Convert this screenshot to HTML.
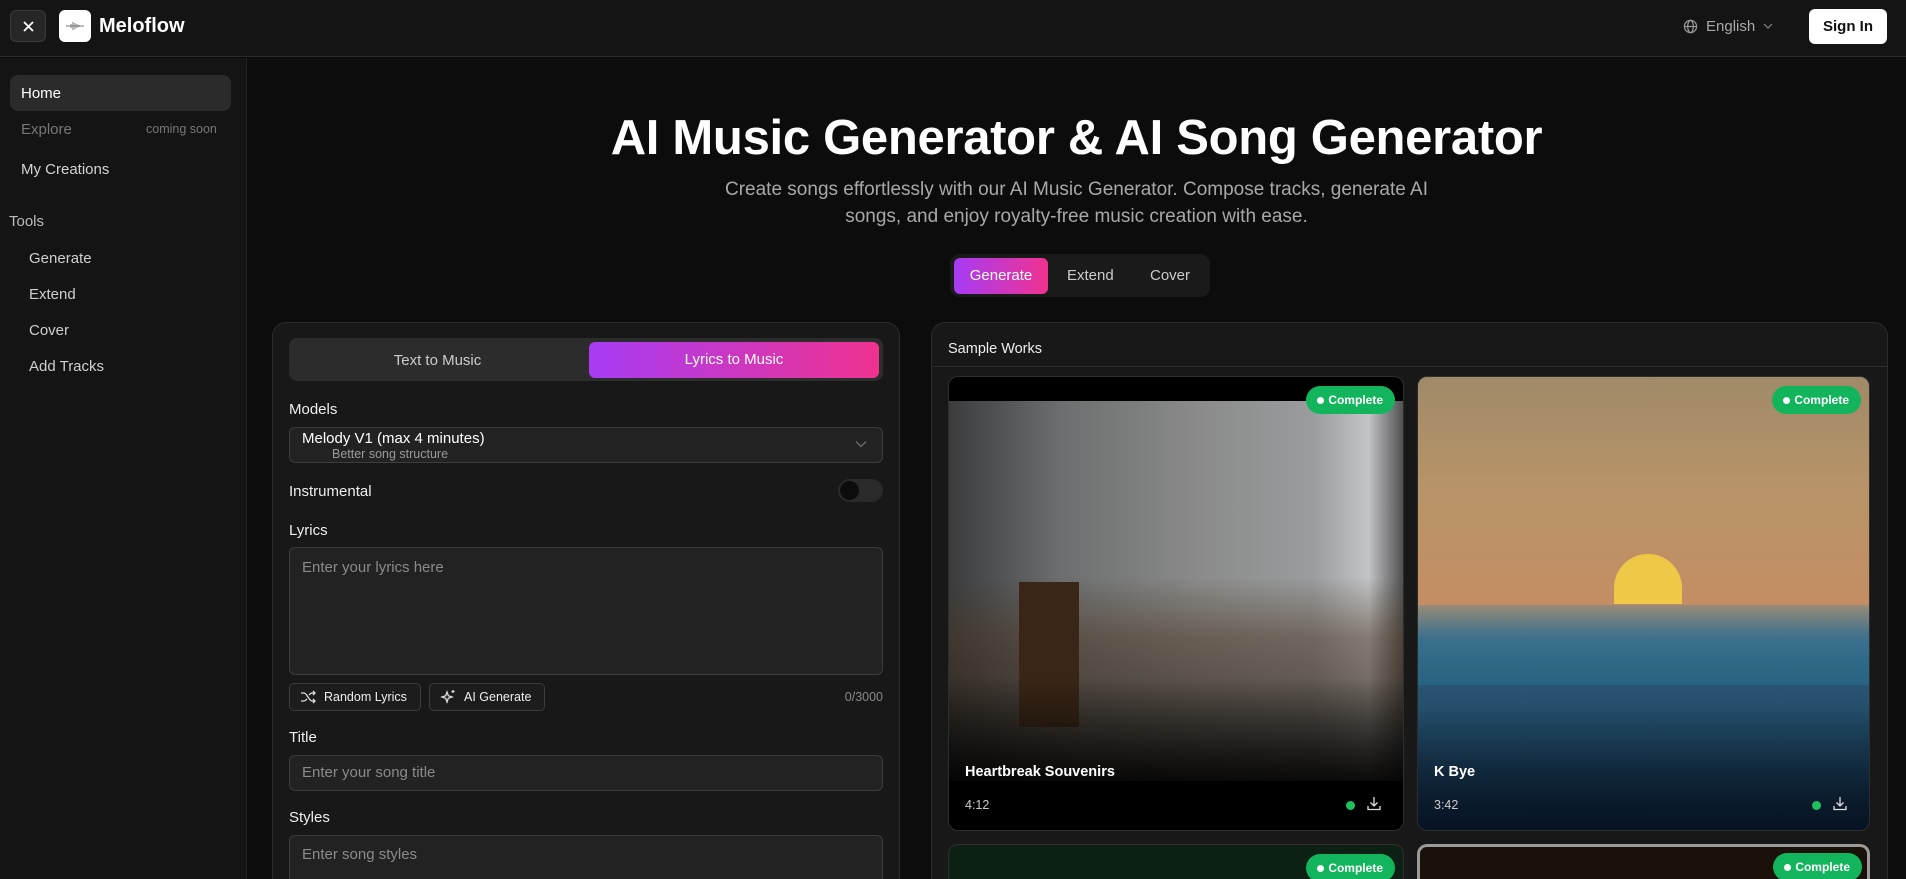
<!DOCTYPE html>
<html><head><meta charset="utf-8"><style>
*{box-sizing:border-box;margin:0;padding:0}
html{width:1906px;height:879px;overflow:hidden}
body{width:1906px;height:879px;overflow:hidden;background:#0c0c0c;font-family:"Liberation Sans",sans-serif;color:#fff;position:relative}
#wrap{position:absolute;left:0;top:0;width:1906px;height:879px;overflow:hidden}
.abs{position:absolute}
.hdr{left:0;top:0;width:1906px;height:57px;background:#141414;border-bottom:1px solid #2a2a2a}
.side{left:0;top:58px;width:247px;height:821px;background:#141414;border-right:1px solid #262626}
.nav{position:absolute;left:21px;font-size:15px;color:#d4d4d4}
.tool{position:absolute;left:29px;font-size:15px;color:#cfcfcf}
.panel{background:#181818;border:1px solid #2c2c2c;border-bottom:none;border-radius:14px 14px 0 0}
.lbl{position:absolute;left:289px;font-size:15px;color:#eee}
.inp{position:absolute;left:289px;width:594px;background:#222;border:1px solid #3c3c3c;border-radius:6px;color:#8a8a8a;font-size:15px;padding-left:12px}
.btn{position:absolute;top:683px;height:28px;border:1px solid #3c3c3c;border-radius:5px;background:#1c1c1c;font-size:12.5px;color:#eee;display:flex;align-items:center;padding-left:10px;gap:8px}
.card{position:absolute;border-radius:10px;overflow:hidden;border:1px solid #2e2e2e}
.badge{position:absolute;top:9px;right:8px;height:28px;padding:0 12px 0 22px;background:#12b45c;border-radius:14px;font-size:12px;font-weight:bold;line-height:28px;color:#fff}
.badge:before{content:"";position:absolute;left:11px;top:11px;width:7px;height:7px;border-radius:50%;background:#fff}
.ct{position:absolute;left:16px;top:387px;font-size:14.5px;font-weight:bold}
.cd{position:absolute;left:16px;top:421px;font-size:12.5px;color:#ccc}
.dot{position:absolute;right:48px;top:424px;width:9px;height:9px;border-radius:50%;background:#1fc25a}
.dl{position:absolute;right:22px;top:419px}
</style></head><body><div id="wrap">
<div class="abs hdr"></div>
<div class="abs" style="left:10px;top:10px;width:36px;height:32px;background:#262626;border:1px solid #3a3a3a;border-radius:6px"><svg width="36" height="32" viewBox="0 0 36 32"><path d="M13 11l9 9M22 11l-9 9" stroke="#fff" stroke-width="1.8"/></svg></div>
<div class="abs" style="left:59px;top:10px;width:32px;height:32px;background:#fff;border-radius:6px"><svg width="32" height="32"><path d="M7 16h18M12 14v4M14 12v8M16 13v6M18 14v4M20 15v2" stroke="#777" stroke-width="1"/></svg></div>
<div class="abs" style="left:99px;top:15px;font-size:20px;font-weight:bold">Meloflow</div>
<svg class="abs" style="left:1683px;top:19px" width="15" height="15" viewBox="0 0 16 16" fill="none" stroke="#999" stroke-width="1.3"><circle cx="8" cy="8" r="6.5"/><ellipse cx="8" cy="8" rx="3" ry="6.5"/><path d="M1.5 8h13"/></svg>
<div class="abs" style="left:1706px;top:18px;font-size:15px;color:#a8a8a8">English</div>
<svg class="abs" style="left:1763px;top:22px" width="10" height="8"><path d="M1 2l4 4 4-4" stroke="#888" fill="none" stroke-width="1.2"/></svg>
<div class="abs" style="left:1809px;top:9px;width:78px;height:35px;background:#fff;border-radius:6px;color:#111;font-size:15px;font-weight:bold;text-align:center;line-height:35px">Sign In</div>

<div class="abs side"></div>
<div class="abs" style="left:10px;top:75px;width:221px;height:36px;background:#2b2b2b;border-radius:8px"></div>
<div class="nav" style="top:85px;color:#fff">Home</div>
<div class="nav" style="top:121px;color:#777">Explore</div>
<div class="abs" style="left:146px;top:122px;font-size:12.5px;color:#777">coming soon</div>
<div class="nav" style="top:161px">My Creations</div>
<div class="abs" style="left:9px;top:213px;font-size:15px;color:#bbb">Tools</div>
<div class="tool" style="top:250px">Generate</div>
<div class="tool" style="top:286px">Extend</div>
<div class="tool" style="top:322px">Cover</div>
<div class="tool" style="top:358px">Add Tracks</div>

<div class="abs" style="left:247px;width:1659px;top:110px;text-align:center;font-size:49px;font-weight:bold;letter-spacing:-0.3px">AI Music Generator &amp; AI Song Generator</div>
<div class="abs" style="left:247px;width:1659px;top:176px;text-align:center;font-size:19px;color:#a8a8a8;line-height:27px">Create songs effortlessly with our AI Music Generator. Compose tracks, generate AI<br>songs, and enjoy royalty-free music creation with ease.</div>
<div class="abs" style="left:950px;top:254px;width:260px;height:43px;background:#1a1a1a;border-radius:10px"></div>
<div class="abs" style="left:954px;top:258px;width:94px;height:36px;border-radius:6px;background:linear-gradient(90deg,#a63cf5,#f0328f);text-align:center;line-height:36px;font-size:15px">Generate</div>
<div class="abs" style="left:1067px;top:267px;font-size:15px;color:#ccc">Extend</div>
<div class="abs" style="left:1150px;top:267px;font-size:15px;color:#ccc">Cover</div>

<div class="abs panel" style="left:272px;top:322px;width:628px;height:557px"></div>
<div class="abs" style="left:289px;top:338px;width:594px;height:43px;background:#2c2c2c;border-radius:8px"></div>
<div class="abs" style="left:289px;top:352px;width:297px;text-align:center;font-size:15px;color:#ccc">Text to Music</div>
<div class="abs" style="left:589px;top:342px;width:290px;height:36px;border-radius:6px;background:linear-gradient(90deg,#a63cf5,#f0328f);text-align:center;line-height:36px;font-size:15px">Lyrics to Music</div>
<div class="lbl" style="top:401px">Models</div>
<div class="inp" style="top:427px;height:36px;color:#fff;padding:2px 0 0 12px"><div style="font-size:15px">Melody V1 (max 4 minutes)</div><div style="font-size:12.5px;color:#999;padding-left:30px">Better song structure</div></div>
<svg class="abs" style="left:855px;top:440px" width="12" height="8"><path d="M1 1.5l5 5 5-5" stroke="#777" fill="none" stroke-width="1.2"/></svg>
<div class="lbl" style="top:483px">Instrumental</div>
<div class="abs" style="left:838px;top:479px;width:45px;height:23px;border-radius:12px;background:#2a2a2a"><div style="position:absolute;left:2px;top:2px;width:19px;height:19px;border-radius:50%;background:#0c0c0c"></div></div>
<div class="lbl" style="top:522px">Lyrics</div>
<div class="inp" style="top:547px;height:128px;padding-top:11px">Enter your lyrics here</div>
<div class="btn" style="left:289px;width:132px"><svg width="16" height="16" viewBox="0 0 16 16" fill="none" stroke="#ddd" stroke-width="1.3"><path d="M1 4h3c3 0 5 8 8 8h3M13 10l2 2-2 2M1 12h3c1.3 0 2-1 3-2M9 6c1-1 1.7-2 3-2h3M13 2l2 2-2 2"/></svg>Random Lyrics</div>
<div class="btn" style="left:429px;width:116px"><svg width="16" height="16" viewBox="0 0 16 16" fill="none" stroke="#ddd" stroke-width="1.3"><path d="M7 3l1.3 3.7L12 8l-3.7 1.3L7 13l-1.3-3.7L2 8l3.7-1.3z"/><path d="M13 1v3M11.5 2.5h3"/></svg>AI Generate</div>
<div class="abs" style="left:820px;top:690px;width:63px;text-align:right;font-size:12.5px;color:#888">0/3000</div>
<div class="lbl" style="top:729px">Title</div>
<div class="inp" style="top:755px;height:36px;line-height:34px">Enter your song title</div>
<div class="lbl" style="top:809px">Styles</div>
<div class="inp" style="top:835px;height:44px;padding-top:10px;border-bottom:none;border-radius:6px 6px 0 0">Enter song styles</div>

<div class="abs panel" style="left:931px;top:322px;width:957px;height:557px"></div>
<div class="abs" style="left:948px;top:341px;font-size:14.5px;color:#eee">Sample Works</div>
<div class="abs" style="left:932px;top:366px;width:955px;height:1px;background:#2c2c2c"></div>

<div class="card" style="left:948px;top:376px;width:456px;height:455px;background:#000">
 <div style="position:absolute;left:0;top:24px;width:456px;height:380px;background:linear-gradient(90deg,#3a3c3e 0%,#6d6f70 25%,#8a8b8a 55%,#9a9c9e 80%,#c2c4c6 92%,#4a4a4a 100%)"></div>
 <div style="position:absolute;left:0;top:200px;width:456px;height:204px;background:linear-gradient(180deg,rgba(60,40,25,.0) 0%,rgba(70,50,30,.5) 30%,rgba(30,25,20,.7) 100%)"></div>
 <div style="position:absolute;left:70px;top:205px;width:60px;height:145px;background:#3a2616"></div>
 <div style="position:absolute;left:0;top:300px;width:456px;height:104px;background:linear-gradient(180deg,rgba(0,0,0,0),rgba(0,0,0,.85))"></div>
 <div class="badge">Complete</div><div class="ct">Heartbreak Souvenirs</div><div class="cd">4:12</div><div class="dot"></div>
 <svg class="dl" width="14" height="15" viewBox="0 0 14 15" fill="none" stroke="#ddd" stroke-width="1.3"><path d="M7 1v9M3.5 6.5L7 10l3.5-3.5M1 10v3.5h12V10"/></svg>
</div>
<div class="card" style="left:1417px;top:376px;width:453px;height:455px;background:linear-gradient(180deg,#a08a68 0%,#b89468 25%,#c48e64 50%,#3e6888 58%,#2c5a78 65%,#1e4560 80%,#0f2436 100%)">
 <div style="position:absolute;left:196px;top:177px;width:68px;height:50px;border-radius:34px 34px 0 0;background:#f0c848"></div>
 <div style="position:absolute;left:0;top:228px;width:453px;height:80px;background:linear-gradient(180deg,rgba(70,140,160,.3),rgba(40,110,140,.6))"></div>
 <div style="position:absolute;left:0;top:330px;width:453px;height:125px;background:linear-gradient(180deg,rgba(0,0,0,0),rgba(5,15,30,.8))"></div>
 <div class="badge">Complete</div><div class="ct">K Bye</div><div class="cd">3:42</div><div class="dot"></div>
 <svg class="dl" width="14" height="15" viewBox="0 0 14 15" fill="none" stroke="#ddd" stroke-width="1.3"><path d="M7 1v9M3.5 6.5L7 10l3.5-3.5M1 10v3.5h12V10"/></svg>
</div>
<div class="card" style="left:948px;top:844px;width:456px;height:35px;background:#0c2014;border-bottom:none;border-radius:10px 10px 0 0"><div class="badge">Complete</div></div>
<div class="card" style="left:1417px;top:844px;width:453px;height:35px;background:#1a120a;border:3px solid #9a9a9a;border-bottom:none;border-radius:10px 10px 0 0"><div class="badge" style="top:6px;right:5px">Complete</div></div>
</div></body></html>
